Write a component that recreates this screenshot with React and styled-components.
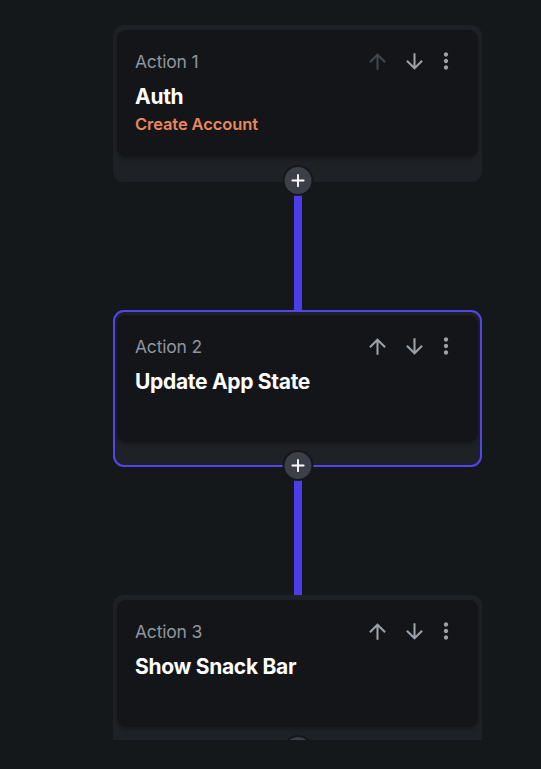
import React from "react";
import styled, { createGlobalStyle } from "styled-components";

const GlobalStyle = createGlobalStyle`
  html, body {
    margin: 0;
    padding: 0;
    background: #15181b;
  }
  body {
    font-family: "Inter", "Noto Sans", sans-serif;
  }
`;

const actions = [
  { id: 1, title: "Auth", subtitle: "Create Account", canMoveUp: false },
  { id: 2, title: "Update App State", selected: true, canMoveUp: true },
  { id: 3, title: "Show Snack Bar", canMoveUp: true },
];

const ArrowUp = () => (
  <svg viewBox="0 0 24 24" width="25" height="25" fill="currentColor">
    <path d="M4 12l1.41 1.41L11 7.83V20h2V7.83l5.58 5.59L20 12l-8-8-8 8z" />
  </svg>
);

const ArrowDown = () => (
  <svg viewBox="0 0 24 24" width="25" height="25" fill="currentColor">
    <path d="M20 12l-1.41-1.41L13 16.17V4h-2v12.17l-5.58-5.59L4 12l8 8 8-8z" />
  </svg>
);

const MoreVert = () => (
  <svg viewBox="0 0 24 24" width="26" height="26" fill="currentColor">
    <path d="M12 8c1.1 0 2-.9 2-2s-.9-2-2-2-2 .9-2 2 .9 2 2 2zm0 2c-1.1 0-2 .9-2 2s.9 2 2 2 2-.9 2-2-.9-2-2-2zm0 6c-1.1 0-2 .9-2 2s.9 2 2 2 2-.9 2-2-.9-2-2-2z" />
  </svg>
);

const Plus = () => (
  <svg viewBox="0 0 24 24" width="17" height="17" fill="none" stroke="#ffffff" strokeWidth="2.6" strokeLinecap="round">
    <path d="M12 4v16M4 12h16" />
  </svg>
);

const App = () => {
  return (
    <>
      <GlobalStyle />
      <Viewport>
        <Flow>
          {actions.map((action, i) => (
            <React.Fragment key={action.id}>
              {i > 0 && <Connector />}
              <Node $selected={action.selected}>
                <Card>
                  <Header>
                    <Label>Action {action.id}</Label>
                    <Tools>
                      <IconButton $dim={!action.canMoveUp}>
                        <ArrowUp />
                      </IconButton>
                      <IconButton>
                        <ArrowDown />
                      </IconButton>
                      <IconButton $tight>
                        <MoreVert />
                      </IconButton>
                    </Tools>
                  </Header>
                  <Title>{action.title}</Title>
                  {action.subtitle && <Subtitle>{action.subtitle}</Subtitle>}
                </Card>
                <AddButton>
                  <Plus />
                </AddButton>
              </Node>
            </React.Fragment>
          ))}
        </Flow>
      </Viewport>
    </>
  );
};

const Viewport = styled.div`
  height: 740px;
  overflow: hidden;
  background: #15181b;
`;

const Flow = styled.div`
  display: flex;
  flex-direction: column;
  align-items: center;
  width: 369px;
  padding: 25px 0 0 113px;
`;

const Node = styled.div`
  position: relative;
  box-sizing: border-box;
  width: 369px;
  height: 157px;
  padding: 3px 2px 0 2px;
  border-radius: 11px;
  background: #1e2125;
  border: 2px solid ${(p) => (p.$selected ? "#5444ee" : "#1e2125")};
`;

const Card = styled.div`
  box-sizing: border-box;
  height: 127px;
  padding: 17px 18px 0 18px;
  border-radius: 9px;
  background: #131519;
  box-shadow: 0 2px 4px rgba(0, 0, 0, 0.25);
`;

const Header = styled.div`
  display: flex;
  align-items: center;
  justify-content: space-between;
  height: 28px;
`;

const Label = styled.span`
  font-size: 17.5px;
  color: #8f959c;
  letter-spacing: -0.2px;
`;

const Tools = styled.div`
  display: flex;
  align-items: center;
  margin-right: 1px;
`;

const IconButton = styled.span`
  display: flex;
  align-items: center;
  justify-content: center;
  color: ${(p) => (p.$dim ? "#43474d" : "#9ca1a8")};
  margin-left: ${(p) => (p.$tight ? "6px" : "12px")};
`;

const Title = styled.div`
  margin-top: 9px;
  font-size: 21px;
  font-weight: 700;
  color: #ffffff;
  letter-spacing: -0.3px;
  line-height: 26px;
`;

const Subtitle = styled.div`
  margin-top: 4px;
  font-size: 16.5px;
  font-weight: 600;
  color: #e8875d;
  letter-spacing: -0.1px;
`;

const AddButton = styled.div`
  position: absolute;
  left: 50%;
  bottom: -16px;
  transform: translateX(-50%);
  width: 27px;
  height: 27px;
  border-radius: 50%;
  background: #3a3f48;
  border: 2px solid #15181b;
  display: flex;
  align-items: center;
  justify-content: center;
  z-index: 2;
`;

const Connector = styled.div`
  width: 8px;
  height: 128px;
  background: #4d3de9;
`;

export default App;
